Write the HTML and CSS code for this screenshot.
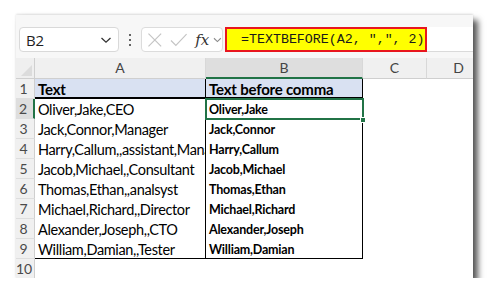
FILE: index.html
```html
<!DOCTYPE html>
<html>
<head>
<meta charset="utf-8">
<link rel="stylesheet" href="styles.css">
</head>
<body>
<div class="window">
  <div class="toolbar">
    <div class="namebox">
      <span class="ref">B2</span>
      <svg class="chev" width="12" height="8" viewBox="0 0 12 8"><path d="M1.5 2 L6 6.2 L10.5 2" fill="none" stroke="#333" stroke-width="1.3"/></svg>
    </div>
    <div class="kebab"><span></span><span></span><span></span></div>
    <div class="fxbox">
      <svg width="16" height="16" viewBox="0 0 16 16"><path d="M1.5 1.5 L14.5 14.5 M14.5 1.5 L1.5 14.5" stroke="#c4c4c4" stroke-width="1.2" fill="none"/></svg>
      <svg width="18" height="16" viewBox="0 0 18 16"><path d="M1 8.5 L6 13.5 L17 2" stroke="#c4c4c4" stroke-width="1.2" fill="none"/></svg>
      <span class="fx">fx</span>
      <svg class="chev2" width="9" height="6" viewBox="0 0 9 6"><path d="M1 1.2 L4.5 4.6 L8 1.2" fill="none" stroke="#8a8a8a" stroke-width="1.1"/></svg>
    </div>
    <div class="formula">
      <div class="hl">=TEXTBEFORE(A2, ",", 2)</div>
    </div>
  </div>
  <div class="sheet">
    <div class="corner"></div>
    <div class="ch">A</div>
    <div class="ch sel">B</div>
    <div class="ch">C</div>
    <div class="ch">D</div>

    <div class="rh">1</div>
    <div class="c a hdr">Text</div>
    <div class="c b hdr">Text before comma</div>
    <div class="c"></div>
    <div class="c"></div>

    <div class="rh selr">2</div>
    <div class="c a">Oliver,Jake,CEO</div>
    <div class="c b active">Oliver,Jake<span class="handle"></span></div>
    <div class="c"></div>
    <div class="c"></div>

    <div class="rh">3</div>
    <div class="c a">Jack,Connor,Manager</div>
    <div class="c b">Jack,Connor</div>
    <div class="c"></div>
    <div class="c"></div>

    <div class="rh">4</div>
    <div class="c a">Harry,Callum,,assistant,Manager</div>
    <div class="c b">Harry,Callum</div>
    <div class="c"></div>
    <div class="c"></div>

    <div class="rh">5</div>
    <div class="c a">Jacob,Michael,,Consultant</div>
    <div class="c b">Jacob,Michael</div>
    <div class="c"></div>
    <div class="c"></div>

    <div class="rh">6</div>
    <div class="c a">Thomas,Ethan,,analsyst</div>
    <div class="c b">Thomas,Ethan</div>
    <div class="c"></div>
    <div class="c"></div>

    <div class="rh">7</div>
    <div class="c a">Michael,Richard,,Director</div>
    <div class="c b">Michael,Richard</div>
    <div class="c"></div>
    <div class="c"></div>

    <div class="rh">8</div>
    <div class="c a">Alexander,Joseph,,CTO</div>
    <div class="c b">Alexander,Joseph</div>
    <div class="c"></div>
    <div class="c"></div>

    <div class="rh">9</div>
    <div class="c a last">William,Damian,,Tester</div>
    <div class="c b last">William,Damian</div>
    <div class="c"></div>
    <div class="c"></div>

    <div class="rh">10</div>
    <div class="c"></div>
    <div class="c"></div>
    <div class="c"></div>
    <div class="c"></div>
  </div>
</div>
</body>
</html>
```

FILE: styles.css
```css
* { box-sizing: border-box; }
html, body { margin: 0; padding: 0; background: #fff; }
body { padding: 15px 0 0 16px; }

.window {
  width: 457px;
  height: 263px;
  background: #f7f7f7;
  overflow: hidden;
  box-shadow: 5px 5px 6px rgba(0,0,0,0.65), 0 -1px 2px rgba(0,0,0,0.12);
}

.toolbar {
  height: 43px;
  padding: 12px 0 0 3px;
  display: flex;
  align-items: flex-start;
  font-family: "Open Sans", "Noto Sans", sans-serif;
}

.namebox {
  width: 100px;
  height: 25px;
  background: #fff;
  border: 1px solid #d9d9d9;
  border-radius: 4px;
  display: flex;
  align-items: center;
  justify-content: space-between;
  padding: 0 6px 0 6px;
}
.ref { font-size: 15px; color: #1f1f1f; letter-spacing: -0.2px; }

.kebab {
  width: 22px;
  height: 25px;
  display: flex;
  flex-direction: column;
  align-items: center;
  justify-content: center;
  gap: 3px;
}
.kebab span { width: 2px; height: 2px; background: #333; border-radius: 1px; }

.fxbox {
  width: 82px;
  height: 25px;
  background: #fff;
  border: 1px solid #dcdcdc;
  border-radius: 4px;
  display: flex;
  align-items: center;
  padding-left: 5px;
  gap: 7px;
}
.fx {
  font-family: "DejaVu Serif", "Liberation Serif", serif;
  font-style: italic;
  font-size: 15px;
  color: #333;
  margin-left: 1px;
}
.chev2 { margin-left: -3px; }

.formula {
  flex: 1;
  height: 25px;
  margin-left: 2px;
  background: #fff;
  border-bottom: 1px solid #dadada;
}
.hl {
  width: 202px;
  height: 25px;
  background: #ffff00;
  border: 2px solid #e8161e;
  font-family: "Liberation Mono", monospace;
  font-size: 13.3px;
  line-height: 21px;
  padding-left: 14px;
  color: #1a1a1a;
  white-space: pre;
}

.sheet {
  display: grid;
  grid-template-columns: 19px 171px 157px 64px 64px;
  grid-template-rows: 21px repeat(10, 20px);
  background: #fff;
  font-family: Lato, "Open Sans", sans-serif;
}

.corner {
  background: #efefef;
  border-right: 1px solid #cfcfcf;
  border-bottom: 1px solid #cfcfcf;
  position: relative;
}
.corner::after {
  content: "";
  position: absolute;
  right: 2px;
  bottom: 2px;
  width: 0; height: 0;
  border-left: 11px solid transparent;
  border-bottom: 11px solid #dcdcdc;
}

.ch {
  background: #f0f0f0;
  border-right: 1px solid #d8d8d8;
  border-bottom: 1px solid #cfcfcf;
  text-align: center;
  font-size: 14px;
  line-height: 20px;
  color: #444;
}
.ch.sel {
  background: #dedede;
  border-bottom: 2px solid #217346;
}

.rh {
  background: #f0f0f0;
  border-right: 1px solid #cfcfcf;
  border-bottom: 1px solid #dedede;
  font-size: 14px;
  line-height: 20px;
  color: #4a4a4a;
  text-align: center;
  padding-right: 3px;
}
.rh.selr {
  background: #dedede;
  border-right: 2px solid #217346;
}

.c {
  white-space: nowrap;
  overflow: hidden;
  color: #000;
  position: relative;
}
.c.a {
  font-size: 14.5px;
  letter-spacing: -0.35px;
  line-height: 21px;
  padding-left: 3px;
  border-right: 1px solid #000;
}
.c.b {
  font-size: 12.5px;
  letter-spacing: -0.2px;
  font-weight: bold;
  line-height: 21px;
  padding-left: 3px;
  border-right: 1px solid #000;
  background: #fff;
}
.c.hdr {
  background: #d9e1f2;
  font-size: 15px;
  letter-spacing: -0.2px;
  font-weight: bold;
  line-height: 20px;
  border-bottom: 2px solid #000;
}
.c.last { border-bottom: 1px solid #000; }

.c.active {
  overflow: visible;
  outline: 2px solid #217346;
  outline-offset: -1px;
  z-index: 2;
}
.handle {
  position: absolute;
  right: -4px;
  bottom: -4px;
  width: 6px;
  height: 6px;
  background: #217346;
  border: 1px solid #fff;
}
```
